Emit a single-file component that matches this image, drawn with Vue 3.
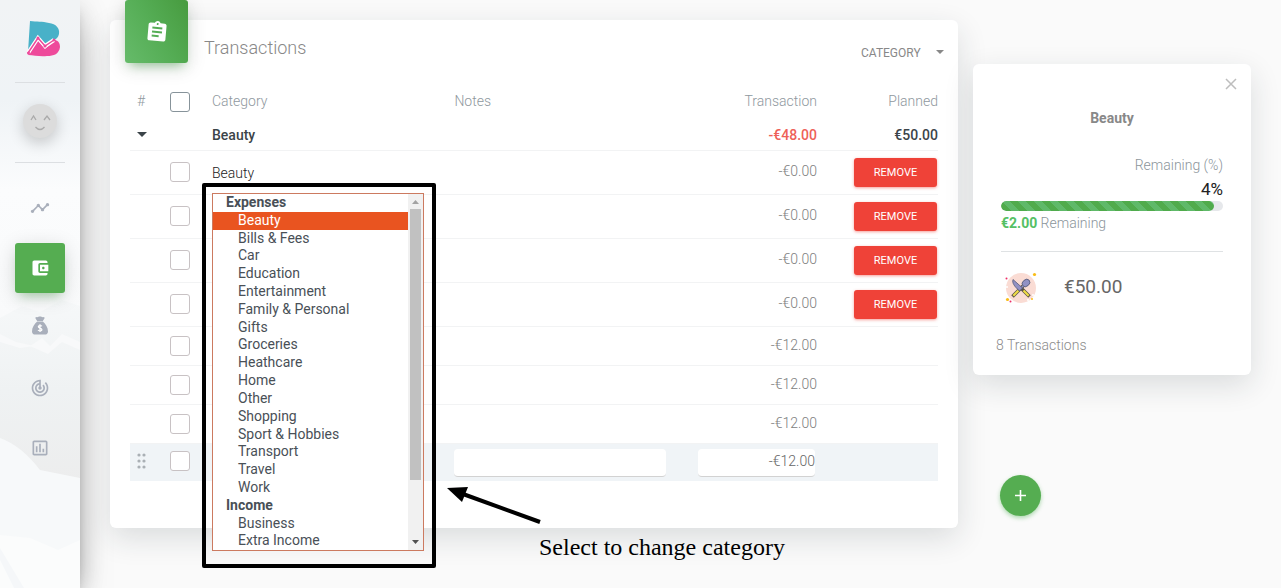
<script setup>
import { ref } from 'vue'

const grouping = ref('Category')
const selected = ref('Beauty')
const note = ref('')
const amount = ref('-€12.00')

const expenses = [
  'Beauty', 'Bills & Fees', 'Car', 'Education', 'Entertainment', 'Family & Personal',
  'Gifts', 'Groceries', 'Heathcare', 'Home', 'Other', 'Shopping', 'Sport & Hobbies',
  'Transport', 'Travel', 'Work',
]
const income = ['Business', 'Extra Income']

const rows = [
  { id: 1, name: 'Beauty', amount: '-€0.00', removable: true },
  { id: 2, name: '', amount: '-€0.00', removable: true },
  { id: 3, name: '', amount: '-€0.00', removable: true },
  { id: 4, name: '', amount: '-€0.00', removable: true },
  { id: 5, name: '', amount: '-€12.00', removable: false },
  { id: 6, name: '', amount: '-€12.00', removable: false },
  { id: 7, name: '', amount: '-€12.00', removable: false },
]

const nav = [
  {
    label: 'Overview',
    path: 'M23 8c0 1.1-.9 2-2 2-.18 0-.35-.02-.51-.07l-3.56 3.55c.05.16.07.34.07.52 0 1.1-.9 2-2 2s-2-.9-2-2c0-.18.02-.36.07-.52l-2.55-2.55c-.16.05-.34.07-.52.07s-.36-.02-.52-.07l-4.55 4.56c.05.16.07.33.07.51 0 1.1-.9 2-2 2s-2-.9-2-2 .9-2 2-2c.18 0 .35.02.51.07l4.56-4.55C8.02 9.36 8 9.18 8 9c0-1.1.9-2 2-2s2 .9 2 2c0 .18-.02.36-.07.52l2.55 2.55c.16-.05.34-.07.52-.07s.36.02.52.07l3.55-3.56C19.02 8.35 19 8.18 19 8c0-1.1.9-2 2-2s2 .9 2 2z',
  },
  {
    label: 'Wallet',
    active: true,
    path: 'M21 18v1c0 1.1-.9 2-2 2H5c-1.11 0-2-.9-2-2V5c0-1.1.89-2 2-2h14c1.1 0 2 .9 2 2v1h-9c-1.11 0-2 .9-2 2v8c0 1.1.89 2 2 2h9zm-9-2h10V8H12v8zm4-2.5c-.83 0-1.5-.67-1.5-1.5s.67-1.5 1.5-1.5 1.5.67 1.5 1.5-.67 1.5-1.5 1.5z',
  },
  {
    label: 'Budget',
    bag: true,
    path: 'M7.6 1.2c1.5.9 2.7-.5 4.4-.5s2.900 1.400 4.400.5c1 .1 1.400.9.9 1.700L15.400 6H8.600L6.700 2.900c-.5-.8-.1-1.600.9-1.700zM8.600 6.600h6.800c3.400 2.800 6.200 7.300 6.200 11.900 0 2.400-1.500 3.800-3.900 3.800H6.300c-2.400 0-3.900-1.400-3.900-3.800 0-4.600 2.800-9.100 6.200-11.900z',
  },
  {
    label: 'Goals',
    path: 'M19.07 4.93l-1.41 1.41C19.1 7.79 20 9.79 20 12c0 4.42-3.58 8-8 8s-8-3.58-8-8c0-4.08 3.05-7.44 7-7.93v2.02C8.16 6.57 6 9.03 6 12c0 3.31 2.69 6 6 6s6-2.69 6-6c0-1.66-.67-3.16-1.76-4.24l-1.41 1.41C15.55 9.9 16 10.9 16 12c0 2.21-1.79 4-4 4s-4-1.79-4-4c0-1.86 1.28-3.41 3-3.86v2.14c-.6.35-1 .98-1 1.72 0 1.1.9 2 2 2s2-.9 2-2c0-.74-.4-1.38-1-1.72V2h-1C6.48 2 2 6.48 2 12s4.48 10 10 10 10-4.48 10-10c0-2.76-1.12-5.26-2.93-7.07z',
  },
  {
    label: 'Reports',
    path: 'M9 17H7v-7h2v7zm4 0h-2V7h2v10zm4 0h-2v-4h2v4zm2 2H5V5h14v14zm0-16H5c-1.1 0-2 .9-2 2v14c0 1.1.9 2 2 2h14c1.1 0 2-.9 2-2V5c0-1.1-.9-2-2-2z',
  },
]
</script>

<template>
  <div class="page">
    <aside class="sidebar">
      <svg class="scenery" viewBox="0 0 80 588" preserveAspectRatio="none" aria-hidden="true">
        <defs>
          <linearGradient id="slope" x1="0" y1="0" x2="0" y2="1">
            <stop offset="0" stop-color="#f6f8f9" />
            <stop offset="0.45" stop-color="#eff2f3" />
            <stop offset="1" stop-color="#ececec" />
          </linearGradient>
        </defs>
        <path d="M0 318L22 306L40 312L62 300L80 306V500H0Z" fill="url(#slope)" />
        <path d="M30 346L42 338L50 346L62 334L80 342V350L62 342L48 354Z" fill="#f8f9fa" />
        <path d="M0 334L16 342L34 346L20 348L0 342Z" fill="#f8f9fa" />
        <path d="M0 438Q22 446 40 470L80 478V588H0Z" fill="#f7f9fa" />
        <path d="M0 535L30 538L58 550L80 540V588H0Z" fill="#fbfcfc" />
        <path d="M0 548L24 588H14L0 560Z" fill="#f5f7f9" />
      </svg>
      <a class="logo" href="#" aria-label="Home">
        <svg width="34" height="36" viewBox="0 0 34 36">
          <path d="M3 0C10 1 15 0 22 2C29 3 33 7 32 13C31 17 29 19 26 18L19 24L11 16L1 31Z" fill="#49b1c8" />
          <path d="M1 34L11 19L18 28L28 19C32 20 33 23 33 26C32 33 27 35 20 35C13 36 7 34 1 34Z" fill="#ee4a9b" />
          <path d="M1 32L11 17L18 25L27 19" fill="none" stroke="#fff" stroke-width="4" />
          <path d="M1 32L11 17L18 25L27 19" fill="none" stroke="#ee4a9b" stroke-width="1.500" />
          <g fill="#ee4a9b"><circle cx="1.500" cy="32" r="1.500" /><circle cx="11" cy="17" r="1.500" /><circle cx="18" cy="25" r="1.500" /><circle cx="27" cy="19" r="1.500" /></g>
        </svg>
      </a>
      <div class="profile">
        <a class="avatar" href="#" aria-label="Profile">
          <svg width="34" height="34" viewBox="0 0 34 34" fill="none" stroke="#aaa" stroke-width="1.300">
            <path d="M8 16L10.500 12L13 16M21 16L24 12L27 16M12.500 23Q17 28 21.500 23" />
          </svg>
        </a>
      </div>
      <nav class="nav">
        <a v-for="item in nav" :key="item.label" href="#" class="nav-item" :class="{ active: item.active, bag: item.bag }" :aria-label="item.label">
          <svg width="20" height="20" viewBox="0 0 24 24" aria-hidden="true">
            <path :d="item.path" fill="currentColor" />
            <path v-if="item.bag" d="M14.300 12.300C13.500 11.200 10 11.200 10 13C10 14.800 14.300 14.200 14.300 16.400C14.300 18.200 10.600 18.200 9.600 16.800M12 10V19.300" fill="none" stroke="#fff" stroke-width="1.500" />
          </svg>
        </a>
      </nav>
    </aside>

    <main class="content">
      <section class="card transactions">
        <header class="card-head">
          <div class="card-icon">
            <svg width="24" height="24" viewBox="0 0 24 24" aria-hidden="true">
              <path transform="rotate(5 12 12)" fill="#fff" d="M19 3h-4.180C14.400 1.840 13.300 1 12 1c-1.300 0-2.400.84-2.820 2H5c-1.100 0-2 .9-2 2v14c0 1.100.9 2 2 2h14c1.100 0 2-.9 2-2V5c0-1.100-.9-2-2-2zm-7 0c.55 0 1 .45 1 1s-.45 1-1 1-1-.45-1-1 .45-1 1-1zm2 14H7v-2h7v2zm3-4H7v-2h10v2zm0-4H7V7h10v2z" />
            </svg>
          </div>
          <h1>Transactions</h1>
          <div class="grouping">
            <select v-model="grouping" aria-label="Group by">
              <option>Category</option>
            </select>
            <svg width="8" height="4" viewBox="0 0 8 4" aria-hidden="true"><path d="M0 0H8L4 4Z" fill="#888" /></svg>
          </div>
        </header>

        <table>
          <colgroup>
            <col class="c-num"><col class="c-check"><col class="c-category"><col><col class="c-amount"><col class="c-planned">
          </colgroup>
          <thead>
            <tr>
              <th class="num">#</th>
              <th class="pick"><input type="checkbox" class="all" aria-label="Select all"></th>
              <th>Category</th>
              <th>Notes</th>
              <th class="right">Transaction</th>
              <th class="right">Planned</th>
            </tr>
          </thead>
          <tbody>
            <tr class="group">
              <td class="num">
                <button type="button" class="toggle" aria-label="Collapse Beauty">
                  <svg width="10" height="5" viewBox="0 0 10 5"><path d="M0 0H10L5 5Z" fill="#3b4449" /></svg>
                </button>
              </td>
              <td></td>
              <td>Beauty</td>
              <td></td>
              <td class="right negative">-€48.00</td>
              <td class="right">€50.00</td>
            </tr>
            <tr v-for="row in rows" :key="row.id" :class="row.removable ? 'tall' : 'short'">
              <td></td>
              <td class="pick"><input type="checkbox" :aria-label="'Select transaction ' + row.id"></td>
              <td class="name">{{ row.name }}</td>
              <td></td>
              <td class="right amount">{{ row.amount }}</td>
              <td class="right"><button v-if="row.removable" type="button" class="remove">REMOVE</button></td>
            </tr>
            <tr class="editing">
              <td class="num">
                <svg width="10" height="16" viewBox="0 0 10 16" fill="#aab0b5" aria-hidden="true">
                  <circle cx="2" cy="2" r="1.600" /><circle cx="7" cy="2" r="1.600" />
                  <circle cx="2" cy="8" r="1.600" /><circle cx="7" cy="8" r="1.600" />
                  <circle cx="2" cy="14" r="1.600" /><circle cx="7" cy="14" r="1.600" />
                </svg>
              </td>
              <td class="pick"><input type="checkbox" aria-label="Select transaction 8"></td>
              <td></td>
              <td><input v-model="note" type="text" class="field note" aria-label="Notes"></td>
              <td class="right"><input v-model="amount" type="text" class="field money" aria-label="Transaction amount"></td>
              <td></td>
            </tr>
          </tbody>
        </table>

        <div class="highlight">
          <div class="picker">
            <select v-model="selected" size="20" aria-label="Category">
              <optgroup label="Expenses">
                <option v-for="name in expenses" :key="name">{{ name }}</option>
              </optgroup>
              <optgroup label="Income">
                <option v-for="name in income" :key="name">{{ name }}</option>
              </optgroup>
            </select>
            <div class="scroller" aria-hidden="true">
              <svg width="7" height="4" viewBox="0 0 7 4"><path d="M0 4H7L3.500 0Z" fill="#a3a3a3" /></svg>
              <div class="track"><div class="thumb"></div></div>
              <svg width="7" height="4" viewBox="0 0 7 4"><path d="M0 0H7L3.500 4Z" fill="#505050" /></svg>
            </div>
          </div>
        </div>
        <svg class="pointer" width="96" height="40" viewBox="0 0 96 40" aria-hidden="true">
          <path d="M0 2L21 1L15 16Z" />
          <path d="M16 8L93 36" stroke="#000" stroke-width="4" />
        </svg>
        <p class="hint">Select to change category</p>
      </section>

      <div class="side">
        <section class="card summary">
          <button type="button" class="close" aria-label="Close">
            <svg width="12" height="12" viewBox="0 0 12 12"><path d="M1 1L11 11M11 1L1 11" stroke="#bdbdbd" stroke-width="1.500" /></svg>
          </button>
          <h2>Beauty</h2>
          <div class="remaining-label">Remaining (%)</div>
          <div class="percent">4%</div>
          <div class="bar" role="progressbar" aria-valuenow="96" aria-valuemin="0" aria-valuemax="100" aria-label="Budget used"><div class="fill"></div></div>
          <div class="left"><b>€2.00</b> Remaining</div>
          <div class="budget">
            <svg width="34" height="34" viewBox="0 0 34 34" aria-hidden="true">
              <circle cx="18" cy="18" r="15" fill="#fadcd4" />
              <g fill="none">
                <path d="M9.500 26.500L20 16" stroke="#5b5348" stroke-width="3.600" />
                <path d="M26.500 26.500L18 18" stroke="#5b5348" stroke-width="3.600" />
                <path d="M10.300 25.700L15.500 20.500M25.700 25.700L20.500 20.500" stroke="#efdc45" stroke-width="2.200" />
                <path d="M17 19L21 15" stroke="#9291c4" stroke-width="1.500" />
              </g>
              <path d="M10 9.500C9 13 11 16 16.500 21L19.500 18Z" fill="#9291c4" stroke="#555a78" stroke-width="0.800" />
              <ellipse cx="23" cy="13" rx="4.200" ry="3.300" transform="rotate(-40 23 13)" fill="#9291c4" stroke="#555a78" stroke-width="0.800" />
              <g fill="#f9bc16"><circle cx="31.500" cy="4.500" r="1.600" /><circle cx="4.500" cy="29.500" r="1.600" /><circle cx="29" cy="29" r="1" /></g>
              <g fill="#ee2e67"><circle cx="3.500" cy="8.500" r="1" /><circle cx="7.500" cy="31.500" r="1" /></g>
              <g fill="#fff"><circle cx="25" cy="30" r="1" /><circle cx="30" cy="25" r="1" /><circle cx="4" cy="17" r="1" /></g>
            </svg>
            <span>€50.00</span>
          </div>
          <div class="count">8 Transactions</div>
        </section>
        <button type="button" class="add" aria-label="Add transaction">
          <svg width="13" height="13" viewBox="0 0 13 13"><path d="M6.500 1V12M1 6.500H12" stroke="#fff" stroke-width="1.600" /></svg>
        </button>
      </div>
    </main>
  </div>
</template>

<style>
body {
  background: #fafafa;
}
</style>

<style scoped>
* {
  box-sizing: border-box;
}
.page {
  display: flex;
  min-height: 100vh;
  overflow: hidden;
  font-family: Roboto, "Liberation Sans", sans-serif;
  font-size: 14px;
  font-weight: 300;
  line-height: 20px;
  color: #3c4858;
}
button, input, select {
  font: inherit;
  color: inherit;
  margin: 0;
}
button {
  border: 0;
  padding: 0;
  background: none;
  cursor: pointer;
}
svg {
  display: block;
}
.sidebar {
  position: relative;
  flex: none;
  width: 80px;
  padding: 0 15px;
  background: linear-gradient(#f1f3f5, #eff3f6 100px, #fbfcfd 190px, #f9fafb 320px, #f6f7f8);
  box-shadow: 0 16px 38px -12px rgba(0, 0, 0, 0.56), 0 4px 25px 0 rgba(0, 0, 0, 0.12), 0 8px 10px -5px rgba(0, 0, 0, 0.2);
}
.scenery {
  position: absolute;
  inset: 0;
  width: 100%;
  height: 100%;
}
.logo {
  position: relative;
  display: flex;
  height: 82px;
  padding: 21px 0 0 12px;
}
.profile {
  position: relative;
  display: flex;
  align-items: center;
  justify-content: center;
  height: 81px;
  padding-bottom: 4px;
  border: solid #dcdfe2;
  border-width: 1px 0;
}
.avatar {
  border-radius: 50%;
  background: #dcdcdc;
  box-shadow: 0 5px 15px rgba(0, 0, 0, 0.2);
}
.nav {
  position: relative;
  display: flex;
  flex-direction: column;
  gap: 10px;
  padding-top: 20px;
}
.nav-item {
  display: flex;
  align-items: center;
  justify-content: center;
  height: 50px;
  border-radius: 3px;
  color: #a9afbb;
}
.nav-item.bag {
  padding-bottom: 4px;
}
.nav-item.active {
  color: #fff;
  background: #55ad51;
  box-shadow: 0 4px 20px rgba(0, 0, 0, 0.14), 0 7px 10px -5px rgba(76, 175, 80, 0.4);
}
.content {
  flex: 1;
  display: grid;
  grid-template-columns: minmax(0, 1fr) 278px;
  align-items: start;
  gap: 15px;
  padding: 20px 30px 0;
}
.card {
  position: relative;
  border-radius: 6px;
  background: #fff;
  box-shadow: 0 10px 30px 0 rgba(30, 45, 50, 0.14);
}
.transactions {
  padding: 0 20px 47px;
}
.card-head {
  display: flex;
  height: 64px;
  margin-left: -5px;
}
.card-icon {
  position: relative;
  top: -20px;
  display: flex;
  align-items: center;
  justify-content: center;
  width: 63px;
  height: 63px;
  border-radius: 3px;
  background: linear-gradient(60deg, #66bb6a, #55ad55 50%, #479b3f);
  box-shadow: 0 4px 20px rgba(0, 0, 0, 0.14), 0 7px 10px -5px rgba(76, 175, 80, 0.5);
}
h1 {
  margin: 18px 0 0 16px;
  font-size: 18px;
  font-weight: 300;
  line-height: 20px;
  color: #888;
}
.grouping {
  position: relative;
  display: flex;
  align-items: center;
  height: 20px;
  margin: 23px -6px 0 auto;
}
.grouping select {
  appearance: none;
  width: 83px;
  border: 0;
  padding: 0 20px 0 0;
  background: none;
  font-size: 12px;
  font-weight: 400;
  text-transform: uppercase;
  color: #888;
}
.grouping svg {
  position: absolute;
  right: 0;
  top: 7px;
}
table {
  width: 100%;
  table-layout: fixed;
  border-collapse: separate;
  border-spacing: 0;
}
.c-num { width: 40px; }
.c-check { width: 42px; }
.c-category { width: 30%; }
.c-amount { width: 119px; }
.c-planned { width: 121px; }
th, td {
  padding: 0;
  text-align: left;
  vertical-align: middle;
}
th {
  height: 35px;
  padding-bottom: 2px;
  font-weight: 300;
  color: #8f989e;
}
th.pick {
  padding-bottom: 0;
}
td {
  border-bottom: 1px solid #f2f3f4;
}
.num {
  padding-left: 7px;
}
.right {
  text-align: right;
}
.group td {
  height: 32px;
  font-weight: 500;
  color: #3b4449;
}
.group .negative {
  color: #ee6158;
}
.toggle {
  display: block;
}
.tall td { height: 44px; }
.short td { height: 39px; }
.name {
  color: #222;
}
.tall .pick,
.short .amount {
  padding-bottom: 2px;
}
.tall .amount {
  padding-bottom: 3px;
}
.amount {
  color: #808080;
}
input[type="checkbox"] {
  appearance: none;
  display: block;
  width: 20px;
  height: 20px;
  border: 1px solid #c8c2c4;
  border-radius: 3px;
  background: #fff;
}
input[type="checkbox"].all {
  border-color: #87939a;
}
.remove {
  width: 83px;
  height: 29px;
  margin-right: 1px;
  border-radius: 3px;
  background: #ef4238;
  box-shadow: 0 1px 3px rgba(239, 66, 56, 0.5);
  font-size: 11px;
  font-weight: 400;
  color: #fff;
}
.editing td {
  height: 37px;
  border: 0;
  background: #f0f4f7;
}
.editing .pick,
.editing .num {
  padding-bottom: 4px;
}
.field {
  display: block;
  height: 28px;
  border: 0;
  border-bottom: 1px solid #d2d2d2;
  border-radius: 4px;
  padding: 0 0 3px;
  background: #fff;
}
.note {
  width: calc(100% - 32px);
}
.money {
  width: calc(100% - 2px);
  text-align: right;
  color: #666;
}
.highlight {
  position: absolute;
  left: 92px;
  top: 163px;
  width: 234px;
  padding: 6px 8px 13px 6px;
  border: 4px solid #000;
  border-radius: 2px;
}
.picker {
  display: flex;
  height: 358px;
  border: 1px solid #cc7a60;
  background: #fff;
}
.picker select {
  appearance: none;
  flex: 1;
  min-width: 0;
  height: 100%;
  border: 0;
  border-radius: 0;
  padding: 0;
  outline: 0;
  overflow: hidden;
  background: #fff;
  font-size: 14px;
  font-weight: 400;
  line-height: 18px;
  color: #495057;
}
.picker optgroup {
  padding: 0 0 0 11px;
  font-weight: 700;
}
.picker option {
  min-height: 0;
  margin-left: -11px;
  padding: 0 0 0.13em 25px;
  font-weight: 400;
}
.picker option:checked {
  background: linear-gradient(#e95420, #e95420);
  -webkit-text-fill-color: #fff;
}
.scroller {
  display: flex;
  flex-direction: column;
  align-items: center;
  width: 15px;
  padding: 6px 0;
  background: #f1f1f1;
}
.track {
  flex: 1;
  width: 11px;
  padding: 5px 0;
}
.thumb {
  height: 83%;
  background: #c1c1c1;
}
.pointer {
  position: absolute;
  left: 337px;
  top: 466px;
}
.hint {
  position: absolute;
  left: 429px;
  top: 513px;
  margin: 0;
  font-family: "Liberation Serif", serif;
  font-size: 24px;
  font-weight: 400;
  line-height: 28px;
  white-space: nowrap;
  color: #000;
}
.side {
  padding-top: 44px;
}
.summary {
  padding: 14px 28px 20px;
}
.close {
  display: block;
  margin: 0 -14px 0 auto;
}
h2 {
  margin: 18px 0 27px;
  font-size: 14px;
  font-weight: 700;
  line-height: 20px;
  text-align: center;
  color: #888;
}
.remaining-label, .percent {
  text-align: right;
}
.remaining-label, .left {
  color: #8b959b;
}
.percent {
  padding-top: 4px;
  font-size: 17px;
  font-weight: 400;
  line-height: 20px;
  color: #222;
}
.bar {
  height: 10px;
  margin-top: 2px;
  border-radius: 5px;
  overflow: hidden;
  background: #e6e8eb;
}
.fill {
  width: 96%;
  height: 100%;
  border-radius: 5px;
  background: linear-gradient(45deg, #5fb969 25%, #50ab4c 25% 50%, #5fb969 50% 75%, #50ab4c 75%) 0 0 / 16px 16px;
}
.left {
  padding: 2px 0 18px;
  border-bottom: 1px solid #dfe2e4;
}
.left b {
  font-weight: 700;
  color: #55c064;
}
.budget {
  display: flex;
  align-items: center;
  gap: 27px;
  padding: 18px 0 0 2px;
  font-size: 19px;
  font-weight: 400;
  color: #666;
}
.count {
  margin: 31px 0 0 -5px;
  color: #8c8c8c;
}
.add {
  display: flex;
  align-items: center;
  justify-content: center;
  width: 41px;
  height: 41px;
  margin: 100px 0 0 27px;
  border-radius: 50%;
  background: #55ad51;
  box-shadow: 0 2px 4px rgba(76, 175, 80, 0.45);
}
</style>
